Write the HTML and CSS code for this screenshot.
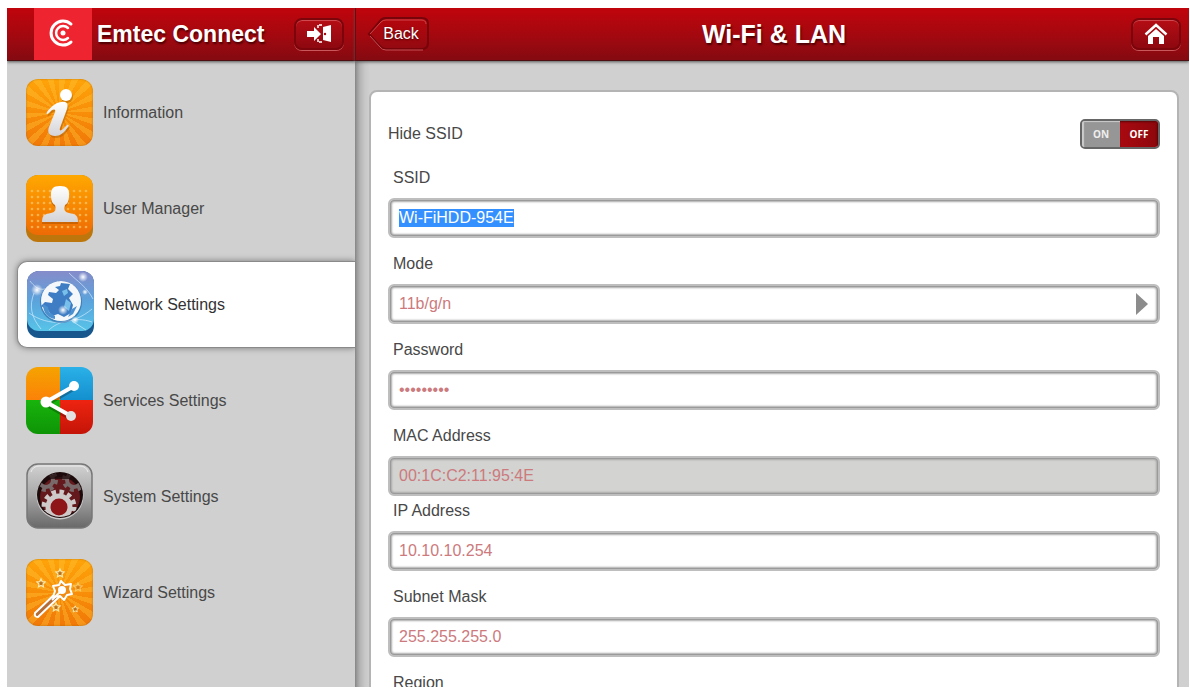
FILE: index.html
```html
<!DOCTYPE html>
<html lang="en">
<head>
    <meta charset="UTF-8">
    <meta name="viewport" content="width=device-width, initial-scale=1.0">
    <title>Emtec Connect</title>
    <link rel="stylesheet" href="styles.css">
</head>
<body>

<div class="app">
    <aside class="sidebar">
        <header class="bar brand">
            <svg class="logo" viewBox="0 0 58 52" fill="none" stroke="#fff" stroke-linecap="round">
                <path d="M37 16 A12 12 0 1 0 37 34" stroke-width="3"/>
                <path d="M34 20 A7 7 0 1 0 34 30" stroke-width="2.5"/>
                <circle cx="29" cy="25" r="2.5" fill="#fff" stroke="none"/>
            </svg>
            <h1>Emtec Connect</h1>
            <button type="button" class="bar-button" aria-label="Log out">
                <svg width="26" height="20" viewBox="0 0 26 20">
                    <path d="M1 7h7V3l7 7-7 7v-4H1z" fill="#fff"/>
                    <path d="M17 3l8-2v17l-8-2z" fill="#fff"/>
                    <path d="M12 4V1h5M12 15v3h5" fill="none" stroke="#fff" stroke-width="1.5" stroke-dasharray="3 1"/>
                    <circle cx="19" cy="10" r="1.2" fill="#a00810"/>
                </svg>
            </button>
        </header>

        <nav class="menu">
            <a class="item" href="#information">
                <svg class="icon burst" viewBox="0 0 67 67">
                    <defs>
                        <linearGradient id="silver" x1="0" y1="0" x2="0" y2="1">
                            <stop offset="0" stop-color="#fff"/>
                            <stop offset="1" stop-color="#d4d4d8"/>
                        </linearGradient>
                    </defs>
                    <g transform="translate(1 2)" fill="#a85a00" opacity=".45">
                        <circle cx="40" cy="16" r="6"/>
                        <path d="M21 33C26 26 33 22 39 23c3 1 3 4 2 7l-7 19c-1 3 1 3 3 1l4-4c2-1 2 1 1 2-4 6-8 9-13 9-6 0-8-4-6-9l6-15c1-3-1-3-3-2l-3 3c-2 2-3 1-2-1z"/>
                    </g>
                    <circle cx="40" cy="16" r="6" fill="#fff"/>
                    <path fill="url(#silver)" d="M21 33C26 26 33 22 39 23c3 1 3 4 2 7l-7 19c-1 3 1 3 3 1l4-4c2-1 2 1 1 2-4 6-8 9-13 9-6 0-8-4-6-9l6-15c1-3-1-3-3-2l-3 3c-2 2-3 1-2-1z"/>
                </svg>
                <span>Information</span>
            </a>
            <a class="item" href="#users">
                <svg class="icon" viewBox="0 0 67 67">
                    <defs>
                        <linearGradient id="orange" x1="0" y1="0" x2="0" y2="1">
                            <stop offset="0" stop-color="#ffa800"/>
                            <stop offset="1" stop-color="#ee6a05"/>
                        </linearGradient>
                        <pattern id="dots" x="3" y="13" width="6" height="6" patternUnits="userSpaceOnUse">
                            <circle cx="3" cy="3" r="1.3" fill="#ffc86a"/>
                        </pattern>
                    </defs>
                    <rect width="67" height="67" rx="12" fill="#bd760c"/>
                    <rect width="67" height="60" rx="12" fill="url(#orange)"/>
                    <rect x="3" y="13" width="60" height="42" fill="url(#dots)" opacity=".7"/>
                    <path d="M16 49c0-7 3-8 9-9 5-1 5-4 4-8-3-2-4-5-4-9-1-9 3-11 9-11s10 2 9 11c0 4-1 7-4 9-1 4-1 7 4 8 6 1 9 2 9 9z" fill="#a64f00" opacity=".5"/>
                    <path d="M16 47c0-7 3-8 9-9 5-1 5-4 4-8-2-1-4-4-4-8-1-8 2-11 9-11s10 3 9 11c0 4-2 7-4 8-1 4-1 7 4 8 6 1 9 2 9 9z" fill="url(#silver)"/>
                </svg>
                <span>User Manager</span>
            </a>
            <a class="item active" href="#network" aria-current="page">
                <svg class="icon" viewBox="0 0 67 67">
                    <defs>
                        <linearGradient id="sky" x1="0" y1="0" x2="0" y2="1">
                            <stop offset="0" stop-color="#858cca"/>
                            <stop offset=".5" stop-color="#5ba3dc"/>
                            <stop offset="1" stop-color="#57c4e8"/>
                        </linearGradient>
                        <radialGradient id="glow">
                            <stop offset="0" stop-color="#fff"/>
                            <stop offset="1" stop-color="#fff" stop-opacity="0"/>
                        </radialGradient>
                    </defs>
                    <rect width="67" height="67" rx="12" fill="#17578d"/>
                    <rect width="67" height="60" rx="12" fill="url(#sky)"/>
                    <path d="M3 10c8 10 14 12 28 0M7 22C2 35 4 46 14 58M42 2c8 8 18 14 24 26M2 42c20 14 44 12 63-4M22 59c8-8 26-14 43-8M45 50l14 9" fill="none" stroke="#d9f0ff" stroke-width=".8" opacity=".8"/>
                    <circle cx="34" cy="31" r="21" fill="#22559a" opacity=".5"/>
                    <circle cx="34" cy="30" r="20" fill="#f5f8fb"/>
                    <path d="M34 12l9 1-2 5 5 5-4 4 4 7-2 8-7 4-6-3-6 2-4-6-7-4 4-4 7 1 1-4-5-4 1-3 7 1 3-3-4-3 5-1z" fill="#3e7cc4"/>
                    <path d="M16 33l5 3 1 5 6 4v3c-7-1-12-6-12-15z" fill="#4b91d0"/>
                    <path d="M35 20l5-2 1 4-4 3zM39 28l5 4-2 8-5-4z" fill="#78c0ea"/>
                    <path d="M45 38l5-3-4 8-5 3z" fill="#4b91d0"/>
                    <circle cx="10" cy="19" r="6" fill="url(#glow)"/>
                    <circle cx="56" cy="6" r="5" fill="url(#glow)"/>
                    <circle cx="36" cy="39" r="5" fill="url(#glow)"/>
                    <circle cx="48" cy="49" r="4" fill="url(#glow)"/>
                    <circle cx="58" cy="21" r="3" fill="url(#glow)"/>
                </svg>
                <span>Network Settings</span>
            </a>
            <a class="item" href="#services">
                <svg class="icon rounded" viewBox="0 0 67 67">
                    <defs>
                        <linearGradient id="amber" x1="0" y1="0" x2="0" y2="1"><stop offset="0" stop-color="#f5a300"/><stop offset="1" stop-color="#fb8208"/></linearGradient>
                        <linearGradient id="blue" x1="0" y1="0" x2="0" y2="1"><stop offset="0" stop-color="#2bb1e8"/><stop offset="1" stop-color="#138fce"/></linearGradient>
                        <linearGradient id="green" x1="0" y1="0" x2="0" y2="1"><stop offset="0" stop-color="#18b40c"/><stop offset="1" stop-color="#0e9406"/></linearGradient>
                        <linearGradient id="red" x1="0" y1="0" x2="0" y2="1"><stop offset="0" stop-color="#ee2410"/><stop offset="1" stop-color="#c41408"/></linearGradient>
                    </defs>
                    <path d="M0 0h34v33H0z" fill="url(#amber)"/>
                    <path d="M34 0h33v33H34z" fill="url(#blue)"/>
                    <path d="M0 33h34v34H0z" fill="url(#green)"/>
                    <path d="M34 33h33v34H34z" fill="url(#red)"/>
                    <path d="M48 21L20 37l25 14" fill="none" stroke="#000" stroke-width="5" opacity=".25"/>
                    <path d="M48 19L20 35l25 14" fill="none" stroke="#fff" stroke-width="4"/>
                    <circle cx="48" cy="19" r="5" fill="#fff"/>
                    <circle cx="20" cy="35" r="5.5" fill="#fff"/>
                    <circle cx="45" cy="49" r="5" fill="#e2e2e2"/>
                </svg>
                <span>Services Settings</span>
            </a>
            <a class="item" href="#system">
                <svg class="icon" viewBox="0 0 67 67">
                    <defs>
                        <linearGradient id="steel" x1="0" y1="0" x2="0" y2="1"><stop offset="0" stop-color="#d2d2d2"/><stop offset=".5" stop-color="#a6a6a6"/><stop offset="1" stop-color="#686868"/></linearGradient>
                        <clipPath id="hole"><circle cx="34" cy="32" r="22"/></clipPath>
                    </defs>
                    <rect x="1" y="1" width="65" height="64" rx="11" fill="url(#steel)" stroke="#777" stroke-width="1.5"/>
                    <path d="M5 9q2-6 8-6h41q6 0 8 6" fill="none" stroke="#eee" stroke-width="1"/>
                    <circle cx="34" cy="33" r="23.5" fill="#c9c9c9"/>
                    <circle cx="34" cy="32" r="23" fill="#1d0b0c"/>
                    <g clip-path="url(#hole)">
                        <circle cx="34" cy="34" r="20" fill="#64191c"/>
                        <g fill="none" stroke="#78696a">
                            <circle cx="20" cy="17" r="7" stroke-width="4"/>
                            <circle cx="20" cy="17" r="10" stroke-width="4" stroke-dasharray="4 3.85"/>
                            <circle cx="48" cy="17" r="7" stroke-width="4"/>
                            <circle cx="48" cy="17" r="10" stroke-width="4" stroke-dasharray="4 3.85"/>
                        </g>
                        <path d="M10 8h48v8H10z" fill="#1d0b0c" opacity=".75"/>
                        <circle cx="33" cy="44" r="9" fill="#8e1518"/>
                        <circle cx="33" cy="44" r="11" fill="none" stroke="#cfcaca" stroke-width="5"/>
                        <circle cx="33" cy="44" r="15" fill="none" stroke="#cfcaca" stroke-width="5" stroke-dasharray="4.400 3.454"/>
                    </g>
                </svg>
                <span>System Settings</span>
            </a>
            <a class="item" href="#wizard">
                <svg class="icon burst" viewBox="0 0 67 67">
                    <defs>
                        <path id="star" d="M0-4l1.2 2.6 2.9.4-2.1 2 .5 2.8L0 2.400l-2.500 1.400.5-2.800-2.100-2 2.900-.4z"/>
                    </defs>
                    <g fill="#b8701a" stroke="#ffe9a8" stroke-width="1.2">
                        <use href="#star" x="34" y="14"/>
                        <use href="#star" x="15" y="24"/>
                        <use href="#star" x="30" y="48"/>
                        <use href="#star" x="49" y="50" transform="translate(10 10) scale(.8)"/>
                        <use href="#star" x="52" y="28" opacity=".5"/>
                    </g>
                    <g stroke="#fff" stroke-width="2" stroke-linejoin="round">
                        <path d="M30 34L9 54q-1 4 3 4l21-20z" fill="#b36c35"/>
                        <path d="M35 22l4 4 6-1-1 5 2 5-5 1-3 5-4-4-7 1 2-6-2-5 6-1z" fill="#f08c14"/>
                    </g>
                    <path d="M35 32l-9 9" stroke="#fff" stroke-width="2"/>
                    <circle cx="36" cy="31" r="4" fill="#fff"/>
                </svg>
                <span>Wizard Settings</span>
            </a>
        </nav>
    </aside>

    <main class="content">
        <header class="bar title-bar">
            <button type="button" class="back">
                <svg class="back-shape" viewBox="0 0 62 34" fill="none">
                    <path d="M2 17L13 4q2-3 6-3h36q6 0 6 6v19q0 6-6 6H19q-4 0-6-3z" stroke="#760409" stroke-width="2"/>
                    <path d="M3 17L14 5q2-2 5-2h35q5 0 5 4" stroke="#d0474c" stroke-width="1"/>
                    <path d="M3 19l10 11q2 3 6 3h37" stroke="#c45055" stroke-width="1"/>
                </svg>
                <span>Back</span>
            </button>
            <h2>Wi-Fi &amp; LAN</h2>
            <button type="button" class="bar-button home" aria-label="Home">
                <svg width="24" height="22" viewBox="0 0 24 22">
                    <path d="M1.5 11.5L12 2l10.5 9.5" fill="none" stroke="#fff" stroke-width="2.5"/>
                    <path d="M4 13l8-7 8 7v8h-5v-7H9v7H4z" fill="#fff"/>
                </svg>
            </button>
        </header>

        <div class="panel">
            <form class="card">
                <div class="toggle-row">
                    <label for="hideSsid">Hide SSID</label>
                    <div class="toggle">
                        <input type="checkbox" id="hideSsid">
                        <span class="on">ON</span>
                        <span class="off">OFF</span>
                    </div>
                </div>

                <div class="field">
                    <label for="ssid">SSID</label>
                    <input type="text" id="ssid" value="Wi-FiHDD-954E">
                </div>
                <div class="field select-field">
                    <label for="mode">Mode</label>
                    <select id="mode">
                        <option>11b/g/n</option>
                    </select>
                </div>
                <div class="field">
                    <label for="password">Password</label>
                    <input type="password" id="password" value="123456789">
                </div>
                <div class="field tight">
                    <label for="mac">MAC Address</label>
                    <input type="text" id="mac" value="00:1C:C2:11:95:4E" disabled>
                </div>
                <div class="field">
                    <label for="ip">IP Address</label>
                    <input type="text" id="ip" value="10.10.10.254">
                </div>
                <div class="field">
                    <label for="mask">Subnet Mask</label>
                    <input type="text" id="mask" value="255.255.255.0">
                </div>
                <div class="field select-field">
                    <label for="region">Region</label>
                    <select id="region"></select>
                </div>
            </form>
        </div>
    </main>
</div>

<script>
    const ssid = document.getElementById('ssid');
    ssid.focus();
    ssid.select();
</script>

</body>
</html>
```

FILE: styles.css
```css
* {
    box-sizing: border-box;
}

body {
    margin: 0;
    padding: 8px 1px 3px 7px;
    height: 100vh;
    background: #fff;
    color: #484848;
    font-family: "Liberation Sans", Arial, sans-serif;
    font-size: 16px;
    line-height: 20px;
}

h1, h2 {
    margin: 0;
    color: #fff;
    line-height: 32px;
    text-shadow: 1px 2px 2px #4a0004;
    white-space: nowrap;
}

h1 {
    font-size: 23px;
}

h2 {
    font-size: 25px;
}

.app {
    display: grid;
    grid-template-columns: 348px 1fr;
    height: 100%;
    overflow: hidden;
    background: #d0d0d0;
}

/* top bars */
.bar {
    position: relative;
    z-index: 1;
    display: flex;
    align-items: center;
    flex: none;
    height: 53px;
    background: linear-gradient(#c0040c, #a5080f 50%, #850a11);
    border-bottom: 1px solid #4c1013;
    box-shadow: 0 1px 3px #555;
}

.brand {
    padding: 0 11px 0 27px;
}

.logo {
    width: 58px;
    height: 52px;
    margin-right: 5px;
    background: #ee2430;
}

.bar-button {
    display: flex;
    align-items: center;
    justify-content: center;
    width: 50px;
    height: 32px;
    padding: 0;
    border: 2px solid #7c050b;
    border-radius: 8px;
    background: linear-gradient(#b50d15, #8e0810);
    box-shadow: inset 0 1px 0 #cf4a50, 0 1px 0 #c8585c;
}

.brand .bar-button {
    margin-left: auto;
}

.title-bar {
    display: grid;
    grid-template-columns: 1fr auto 1fr;
    padding: 0 8px 0 11px;
    border-left: 1px solid #6c0a0f;
}

.home {
    justify-self: end;
}

.back {
    position: relative;
    justify-self: start;
    width: 62px;
    height: 34px;
    padding: 0 0 0 6px;
    border: 0;
    background: none;
    color: #fff;
    font: inherit;
    text-shadow: 0 1px 2px #4a0004;
}

.back-shape {
    position: absolute;
    inset: 0;
}

.back span {
    position: relative;
}

/* side menu */
.sidebar {
    display: flex;
    flex-direction: column;
}

.menu {
    display: flex;
    flex-direction: column;
    gap: 9px;
    padding: 8px 0 0 10px;
}

.item {
    display: flex;
    align-items: center;
    gap: 10px;
    height: 87px;
    padding-left: 9px;
    color: inherit;
    text-decoration: none;
}

.active {
    border: 1px solid #8a8a8a;
    border-right: 0;
    border-radius: 10px 0 0 10px;
    background: #fff;
    box-shadow: 0 0 6px #777;
    color: #333;
}

.icon {
    width: 67px;
    height: 67px;
    flex: none;
}

.rounded {
    border-radius: 12px;
}

.burst {
    border-radius: 12px;
    background:
        repeating-conic-gradient(rgba(255, 200, 60, 0.35) 0 10deg, transparent 10deg 20deg),
        linear-gradient(#ffa409, #f07808);
    box-shadow: inset 0 0 2px #b06a10;
}

/* settings panel */
.content {
    display: flex;
    flex-direction: column;
    min-width: 0;
    min-height: 0;
}

.panel {
    flex: 1;
    min-height: 0;
    padding: 29px 10px 0 14px;
    overflow-y: auto;
    scrollbar-width: none;
    background: linear-gradient(to right, #858585, #9b9b9b 2px, #b4b4b4 5px, #c8c8c8 10px, #d0d0d0 15px);
}

.card {
    padding: 27px 17px;
    border: 2px solid #b4b4b4;
    border-radius: 8px;
    background: #fff;
}

.toggle-row {
    display: flex;
    justify-content: space-between;
    align-items: center;
    margin-bottom: 19px;
}

.toggle {
    position: relative;
    display: grid;
    grid-template-columns: 1fr 1fr;
    width: 80px;
    height: 30px;
    overflow: hidden;
    border: 2px solid #666;
    border-radius: 5px;
    color: #eee;
    font: bold 10px/27px "Open Sans", sans-serif;
    text-align: center;
}

.toggle input {
    position: absolute;
    inset: 0;
    width: 100%;
    height: 100%;
    margin: 0;
    opacity: 0;
}

.on {
    background: #969696;
    box-shadow: inset 2px 1px 1px #ccc;
}

.off {
    background: linear-gradient(to right, #a80a10, #8d070c);
    box-shadow: inset -1px 1px 2px #5b0508;
    color: #fff;
}

.field {
    position: relative;
    display: flex;
    flex-direction: column;
    gap: 10px;
    margin-bottom: 16px;
}

.field label {
    padding-left: 5px;
}

.tight {
    margin-bottom: 5px;
}

.field input,
.field select {
    width: 100%;
    height: 40px;
    margin: 0;
    padding: 0 9px;
    border: 2px solid #bebebe;
    border-radius: 6px;
    outline: 0;
    appearance: none;
    background: #fff;
    box-shadow: inset 0 0 0 1px #9a9a9a, inset 0 0 2px 2px #a8a8a8;
    color: #cc7a7d;
    font: inherit;
    opacity: 1;
}

.field input:disabled {
    background: #d3d3d1;
}

.field input::selection {
    background: rgba(51, 144, 255, 0.996);
    color: #fff;
}

/* arrow over the right end of the drop-down */
.select-field::after {
    content: "";
    position: absolute;
    right: 12px;
    bottom: 9px;
    border: 11px solid transparent;
    border-left: 12px solid #8c8c8c;
    border-right: 0;
    pointer-events: none;
}
```
